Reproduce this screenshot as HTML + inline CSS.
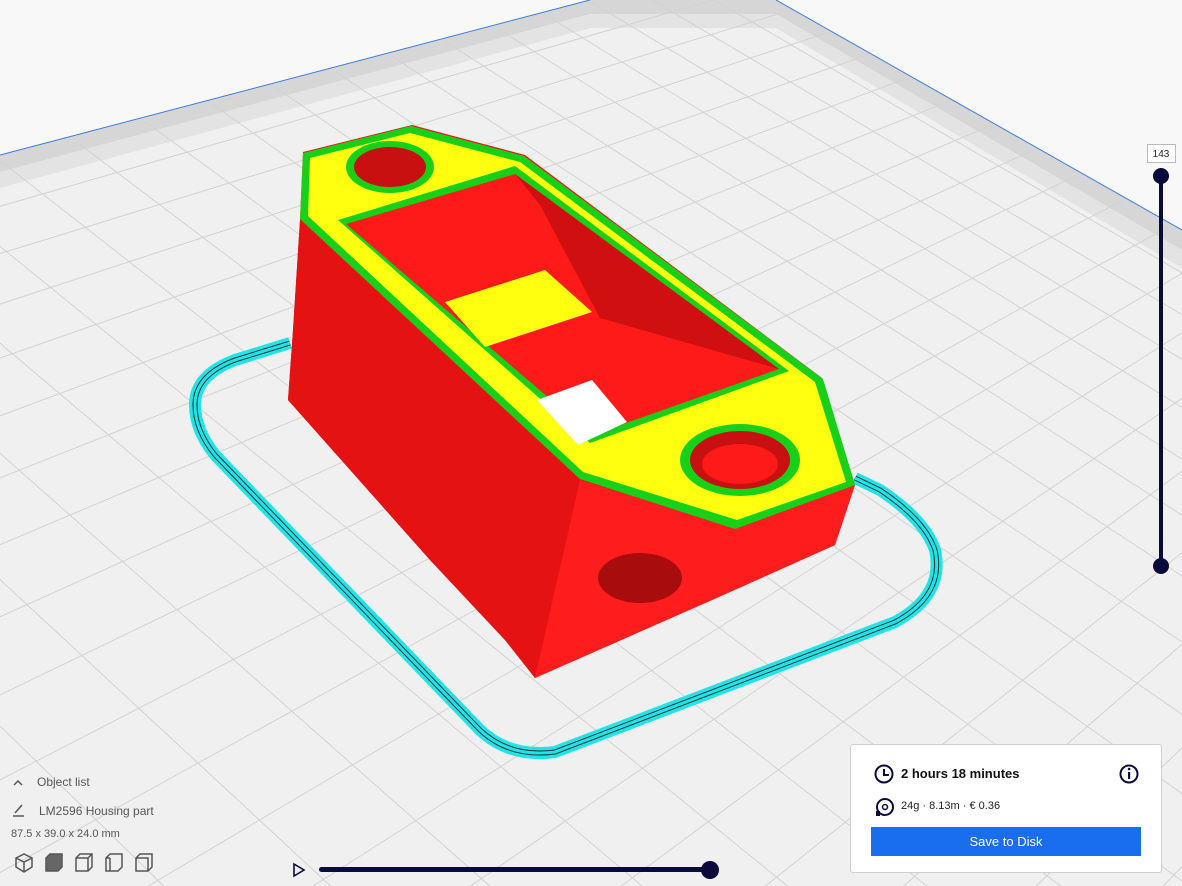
<!DOCTYPE html>
<html><head><meta charset="utf-8"><style>
html,body{margin:0;padding:0;width:1182px;height:886px;overflow:hidden;background:#f8f8f8;font-family:"Liberation Sans",sans-serif}
svg{position:absolute;left:0;top:0}
.t{position:absolute;color:#555;white-space:nowrap}
#panel{position:absolute;left:850px;top:744px;width:310px;height:127px;background:#fff;border:1px solid #cfcfcf;border-radius:3px;overflow:hidden}
#btn{position:absolute;left:20px;top:82px;width:270px;height:29px;background:#196ef0;color:#fff;font-size:13px;text-align:center;line-height:29px}
</style></head><body>
<svg width="1182" height="886" id="s">
<polygon points="0,155 590,0 776,0 1182,230 1182,886 0,886" fill="#f0f0f0"/>
<polygon points="0,155 590,0 776,0 1182,230 1182,250 776,14 590,14 0,172" fill="#d6d6d6"/>
<polygon points="0,172 590,14 776,14 1182,250 1182,268 776,28 590,28 0,188" fill="#e3e3e3"/>
<g id="grid" stroke="#d2d2d2" stroke-width="1"></g>
<polyline points="0,155 590,0" stroke="#3a7be0" stroke-width="1" fill="none"/>
<polyline points="776,0 1182,230" stroke="#3a7be0" stroke-width="1" fill="none"/>
<g fill="none" stroke-linejoin="round">
<path d="M290,343 L235,360 Q195,375 195,405 Q195,430 215,455 L480,730 Q510,758 555,752 L895,622 Q945,595 935,550 Q925,520 880,490 L855,478" stroke="#22e3e8" stroke-width="12"/>
<path d="M290,343 L235,360 Q195,375 195,405 Q195,430 215,455 L480,730 Q510,758 555,752 L895,622 Q945,595 935,550 Q925,520 880,490 L855,478" stroke="#0a3a3a" stroke-width="5"/>
<path d="M290,343 L235,360 Q195,375 195,405 Q195,430 215,455 L480,730 Q510,758 555,752 L895,622 Q945,595 935,550 Q925,520 880,490 L855,478" stroke="#22e3e8" stroke-width="3"/>
</g>
<polygon points="303,152 412,125 525,155 822,378 855,485 835,545 712,600 535,678 505,640 430,560 288,400 293,330 300,220" fill="#f21616"/>
<polygon points="300,220 580,480 535,678 505,640 430,560 288,400 293,330" fill="#e41212"/>
<polygon points="580,480 735,528 855,485 835,545 712,600 535,678" fill="#ff1c1c"/>
<ellipse cx="640" cy="578" rx="42" ry="25" fill="#a80c0c"/>
<polygon points="303,153 411,126 524,156 823,379 855,485 735,529 580,479 300,219" fill="#18d018"/>
<polygon points="310,158 410,133 520,162 815,382 846,482 737,520 583,472 308,216" fill="#ffff10"/>
<polygon points="338,220 515,166 789,371 590,443" fill="#18d018"/>
<polygon points="346,224 515,174 779,369 592,435" fill="#ff1a1a"/>
<polygon points="515,174 779,369 600,318 540,205" fill="#d01010"/>
<polygon points="445,302 545,270 592,312 485,347" fill="#ffff10"/>
<polygon points="537,400 592,380 627,422 578,445" fill="#fff"/>
<ellipse cx="390" cy="167" rx="44" ry="26" fill="#18d018"/>
<ellipse cx="390" cy="167" rx="36" ry="20" fill="#c81010"/>
<ellipse cx="740" cy="460" rx="60" ry="36" fill="#18d018"/>
<ellipse cx="740" cy="460" rx="50" ry="29" fill="#c81010"/>
<ellipse cx="740" cy="464" rx="38" ry="20" fill="#ff1a1a"/>
<rect x="1159" y="176" width="4" height="390" fill="#0a0a3c"/>
<circle cx="1161" cy="176" r="8" fill="#0a0a3c"/><circle cx="1161" cy="566" r="8" fill="#0a0a3c"/>
<rect x="1147.5" y="144.5" width="28" height="18" fill="#fff" stroke="#bbb"/>
<text x="1161" y="157" font-size="10" text-anchor="middle" fill="#222" font-family="Liberation Sans">143</text>
<polygon points="294,864 304,870 294,876" fill="none" stroke="#0a0a3c" stroke-width="1.6"/>
<rect x="319" y="867" width="392" height="5" rx="2.5" fill="#0a0a3c"/>
<circle cx="710" cy="870" r="9" fill="#0a0a3c"/>
<g fill="none" stroke="#555" stroke-width="1.5">
<polyline points="14,785 18,781 22,785"/>
<line x1="13" y1="816" x2="24" y2="816"/><line x1="15" y1="813" x2="22" y2="805"/>
<path d="M16,858 L24,854 L32,858 L32,867 L24,872 L16,867 Z M16,858 L24,862 L32,858 M24,862 L24,872"/>
<path d="M46,858 L50,854 L62,854 L62,867 L58,871 L46,871 Z" fill="#666"/>
<path d="M76,858 L80,854 L92,854 L92,867 L88,871 L76,871 Z M76,858 L88,858 L88,871 M88,858 L92,854"/>
<path d="M106,858 L110,854 L122,854 L122,867 L118,871 L106,871 Z M110,858 L110,871 M106,858 L110,858" />
<path d="M136,858 L140,854 L152,854 L152,867 L148,871 L136,871 Z M136,858 L148,858 L148,871"/>
</g>
</svg>
<div class="t" style="left:37px;top:775px;font-size:12px">Object list</div>
<div class="t" style="left:39px;top:804px;font-size:12px">LM2596 Housing part</div>
<div class="t" style="left:11px;top:828px;font-size:11px">87.5 x 39.0 x 24.0 mm</div>
<div id="panel">
<svg width="310" height="127" style="position:absolute;left:0;top:0">
<circle cx="33" cy="29" r="8.5" fill="none" stroke="#0a0a3c" stroke-width="2"/>
<polyline points="33,24 33,30 38,30" fill="none" stroke="#0a0a3c" stroke-width="2"/>
<circle cx="278" cy="29" r="8.5" fill="none" stroke="#0a0a3c" stroke-width="2"/>
<rect x="277" y="27" width="2.2" height="7" fill="#0a0a3c"/><circle cx="278.1" cy="24" r="1.3" fill="#0a0a3c"/>
<circle cx="34" cy="62" r="8" fill="none" stroke="#0a0a3c" stroke-width="2"/>
<circle cx="34" cy="62" r="2.5" fill="none" stroke="#0a0a3c" stroke-width="1.5"/>
<rect x="25" y="66" width="4" height="5" fill="#0a0a3c"/>
</svg>
<div class="t" style="left:50px;top:21px;font-size:13px;font-weight:bold;color:#111">2 hours 18 minutes</div>
<div class="t" style="left:50px;top:55px;font-size:11px;color:#222">24g · 8.13m · € 0.36</div>
<div id="btn">Save to Disk</div>
</div>
<script>
(function(){
var src=[[0,0],[1,0],[1,1],[0,1]];
var dst=[[717,-33],[1750,560],[500,2300],[-950,420]];
function solve(A,b){var n=b.length;for(var i=0;i<n;i++){var m=i;for(var k=i+1;k<n;k++)if(Math.abs(A[k][i])>Math.abs(A[m][i]))m=k;var t=A[i];A[i]=A[m];A[m]=t;t=b[i];b[i]=b[m];b[m]=t;for(var k=i+1;k<n;k++){var f=A[k][i]/A[i][i];for(var j=i;j<n;j++)A[k][j]-=f*A[i][j];b[k]-=f*b[i];}}var x=new Array(n);for(var i=n-1;i>=0;i--){var s=b[i];for(var j=i+1;j<n;j++)s-=A[i][j]*x[j];x[i]=s/A[i][i];}return x;}
var A=[],b=[];for(var i=0;i<4;i++){var u=src[i][0],v=src[i][1],X=dst[i][0],Y=dst[i][1];A.push([u,v,1,0,0,0,-u*X,-v*X]);b.push(X);A.push([0,0,0,u,v,1,-u*Y,-v*Y]);b.push(Y);}
var h=solve(A,b);
function P(u,v){var w=h[6]*u+h[7]*v+1;return[(h[0]*u+h[1]*v+h[2])/w,(h[3]*u+h[4]*v+h[5])/w];}
var g=document.getElementById('grid'),N=22,s='';
for(var i=1;i<N;i++){var a=P(i/N,0),c=P(i/N,1);s+='<line x1="'+a[0]+'" y1="'+a[1]+'" x2="'+c[0]+'" y2="'+c[1]+'"/>';a=P(0,i/N);c=P(1,i/N);s+='<line x1="'+a[0]+'" y1="'+a[1]+'" x2="'+c[0]+'" y2="'+c[1]+'"/>';}
g.innerHTML=s;
})();
</script>
</body></html>
